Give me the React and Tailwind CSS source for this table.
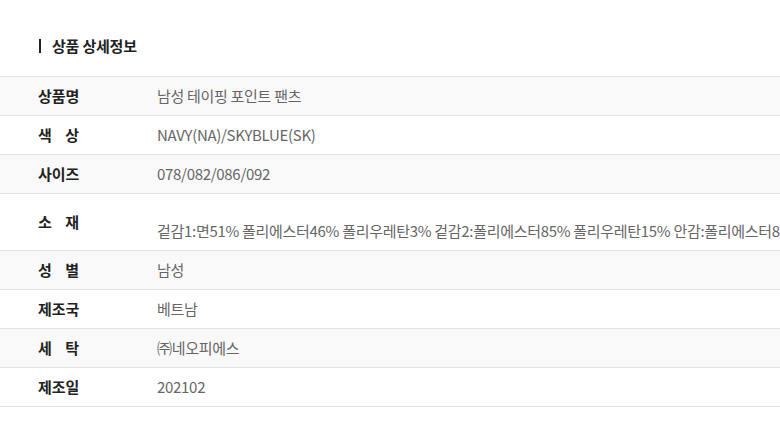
import React from 'react';

const rows = [
  { label: ['상품명'], value: '남성 테이핑 포인트 팬츠' },
  { label: ['색', '상'], value: 'NAVY(NA)/SKYBLUE(SK)' },
  { label: ['사이즈'], value: '078/082/086/092' },
  {
    label: ['소', '재'],
    value: '겉감1:면51% 폴리에스터46% 폴리우레탄3% 겉감2:폴리에스터85% 폴리우레탄15% 안감:폴리에스터87% 폴리우레탄13%',
    tall: true
  },
  { label: ['성', '별'], value: '남성' },
  { label: ['제조국'], value: '베트남' },
  { label: ['세', '탁'], value: '㈜네오피에스' },
  { label: ['제조일'], value: '202102' }
];

const App = () => {
  return (
    <div
      className="w-[780px] h-[445px] overflow-hidden bg-white"
      style={{ fontFamily: '"Noto Sans CJK KR", "Noto Sans", sans-serif' }}
    >
      <div className="pt-[36px] mb-[20px] h-[20px] box-content flex items-center pl-[39px]">
        <span className="w-[2px] h-[14px] bg-[#222]" />
        <h2 className="ml-[11px] text-[15px] leading-[20px] font-bold text-[#222] tracking-[-0.2px]">상품 상세정보</h2>
      </div>

      <div className="border-t border-[#e3e3e3]">
        {rows.map((row, i) => (
          <div
            key={i}
            className={`flex border-b border-[#e3e3e3] ${i % 2 === 0 ? 'bg-[#f9f9f9]' : 'bg-white'} ${row.tall ? 'h-[57px]' : 'h-[39px]'} items-center`}
          >
            <div className="w-[157px] shrink-0 pl-[38px] text-[15px] font-bold text-[#222]">
              {row.label.length > 1 ? (
                <div className="flex justify-between w-[41px]">
                  {row.label.map((c) => (
                    <span key={c}>{c}</span>
                  ))}
                </div>
              ) : (
                row.label[0]
              )}
            </div>
            <div
              className={`whitespace-nowrap text-[15px] text-[#666] tracking-[-0.3px] ${row.tall ? 'mt-[18px]' : ''}`}
            >
              {row.value}
            </div>
          </div>
        ))}
      </div>
    </div>
  );
};

export default App;
